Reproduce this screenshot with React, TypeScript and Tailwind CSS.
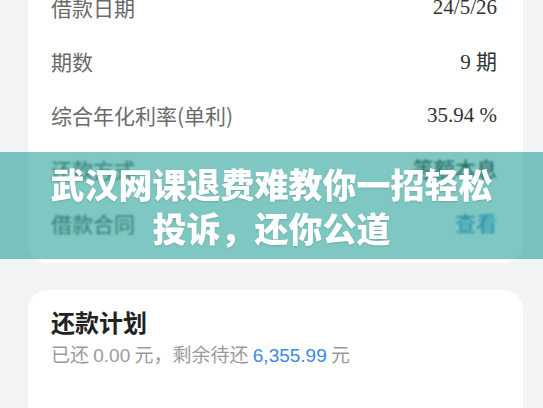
import type {ReactNode} from 'react';

type Row = {label: string; value: ReactNode; blue?: boolean};

const rows: Row[] = [
	{label: '借款日期', value: '24/5/26'},
	{label: '期数', value: <>9 <span className="font-['Noto_Sans_CJK_SC',sans-serif]">期</span></>},
	{label: '综合年化利率(单利)', value: '35.94 %'},
	{label: '还款方式', value: <span className="font-['Noto_Sans_CJK_SC',sans-serif]">等额本息</span>},
	{label: '借款合同', value: <span className="font-['Noto_Sans_CJK_SC',sans-serif]">查看</span>, blue: true},
];

function DetailRow({row}: {row: Row}) {
	return (
		<div className="flex h-[54px] items-center justify-between">
			<span className="text-[21px] text-[#6a6a6a]">{row.label}</span>
			<span
				className={`font-['Liberation_Serif',serif] text-[21px] ${
					row.blue ? 'text-[#3d8fd8]' : 'text-[#333333]'
				}`}
			>
				{row.value}
			</span>
		</div>
	);
}

export default function App() {
	return (
		<div className="relative h-[408px] w-[543px] overflow-hidden bg-[#f2f3f5] font-['Noto_Sans_CJK_SC','Noto_Sans',sans-serif]">
			<div className="pl-[28px] pr-[20px]">
				<div className="-mt-[19px] rounded-b-[20px] bg-white pb-[12px] pl-[23px] pr-[26px]">
					{rows.map((row) => (
						<DetailRow key={row.label} row={row} />
					))}
				</div>
				<div className="mt-[27px] h-[200px] rounded-[20px] bg-white px-[23px] pt-[16px]">
					<h2 className="text-[24px] font-bold leading-[32px] text-[#222222]">还款计划</h2>
					<p className="mt-[2px] text-[19px] leading-[28px] text-[#9a9a9a]">
						已还 <span className="font-['Liberation_Sans',sans-serif]">0.00</span> 元，剩余待还{' '}
						<span className="font-['Liberation_Sans',sans-serif] text-[#3a8ae6]">6,355.99</span> 元
					</p>
				</div>
			</div>

			<div className="absolute left-0 right-0 top-[152px] flex h-[107px] flex-col items-center justify-center bg-[rgba(0,143,134,0.5)] backdrop-blur-[1px]">
				<div className="text-center text-[34px] font-black leading-[44px] text-white [text-shadow:0_1px_2px_rgba(0,0,0,0.15)]">
					<div>武汉网课退费难教你一招轻松</div>
					<div>投诉，还你公道</div>
				</div>
			</div>
		</div>
	);
}
